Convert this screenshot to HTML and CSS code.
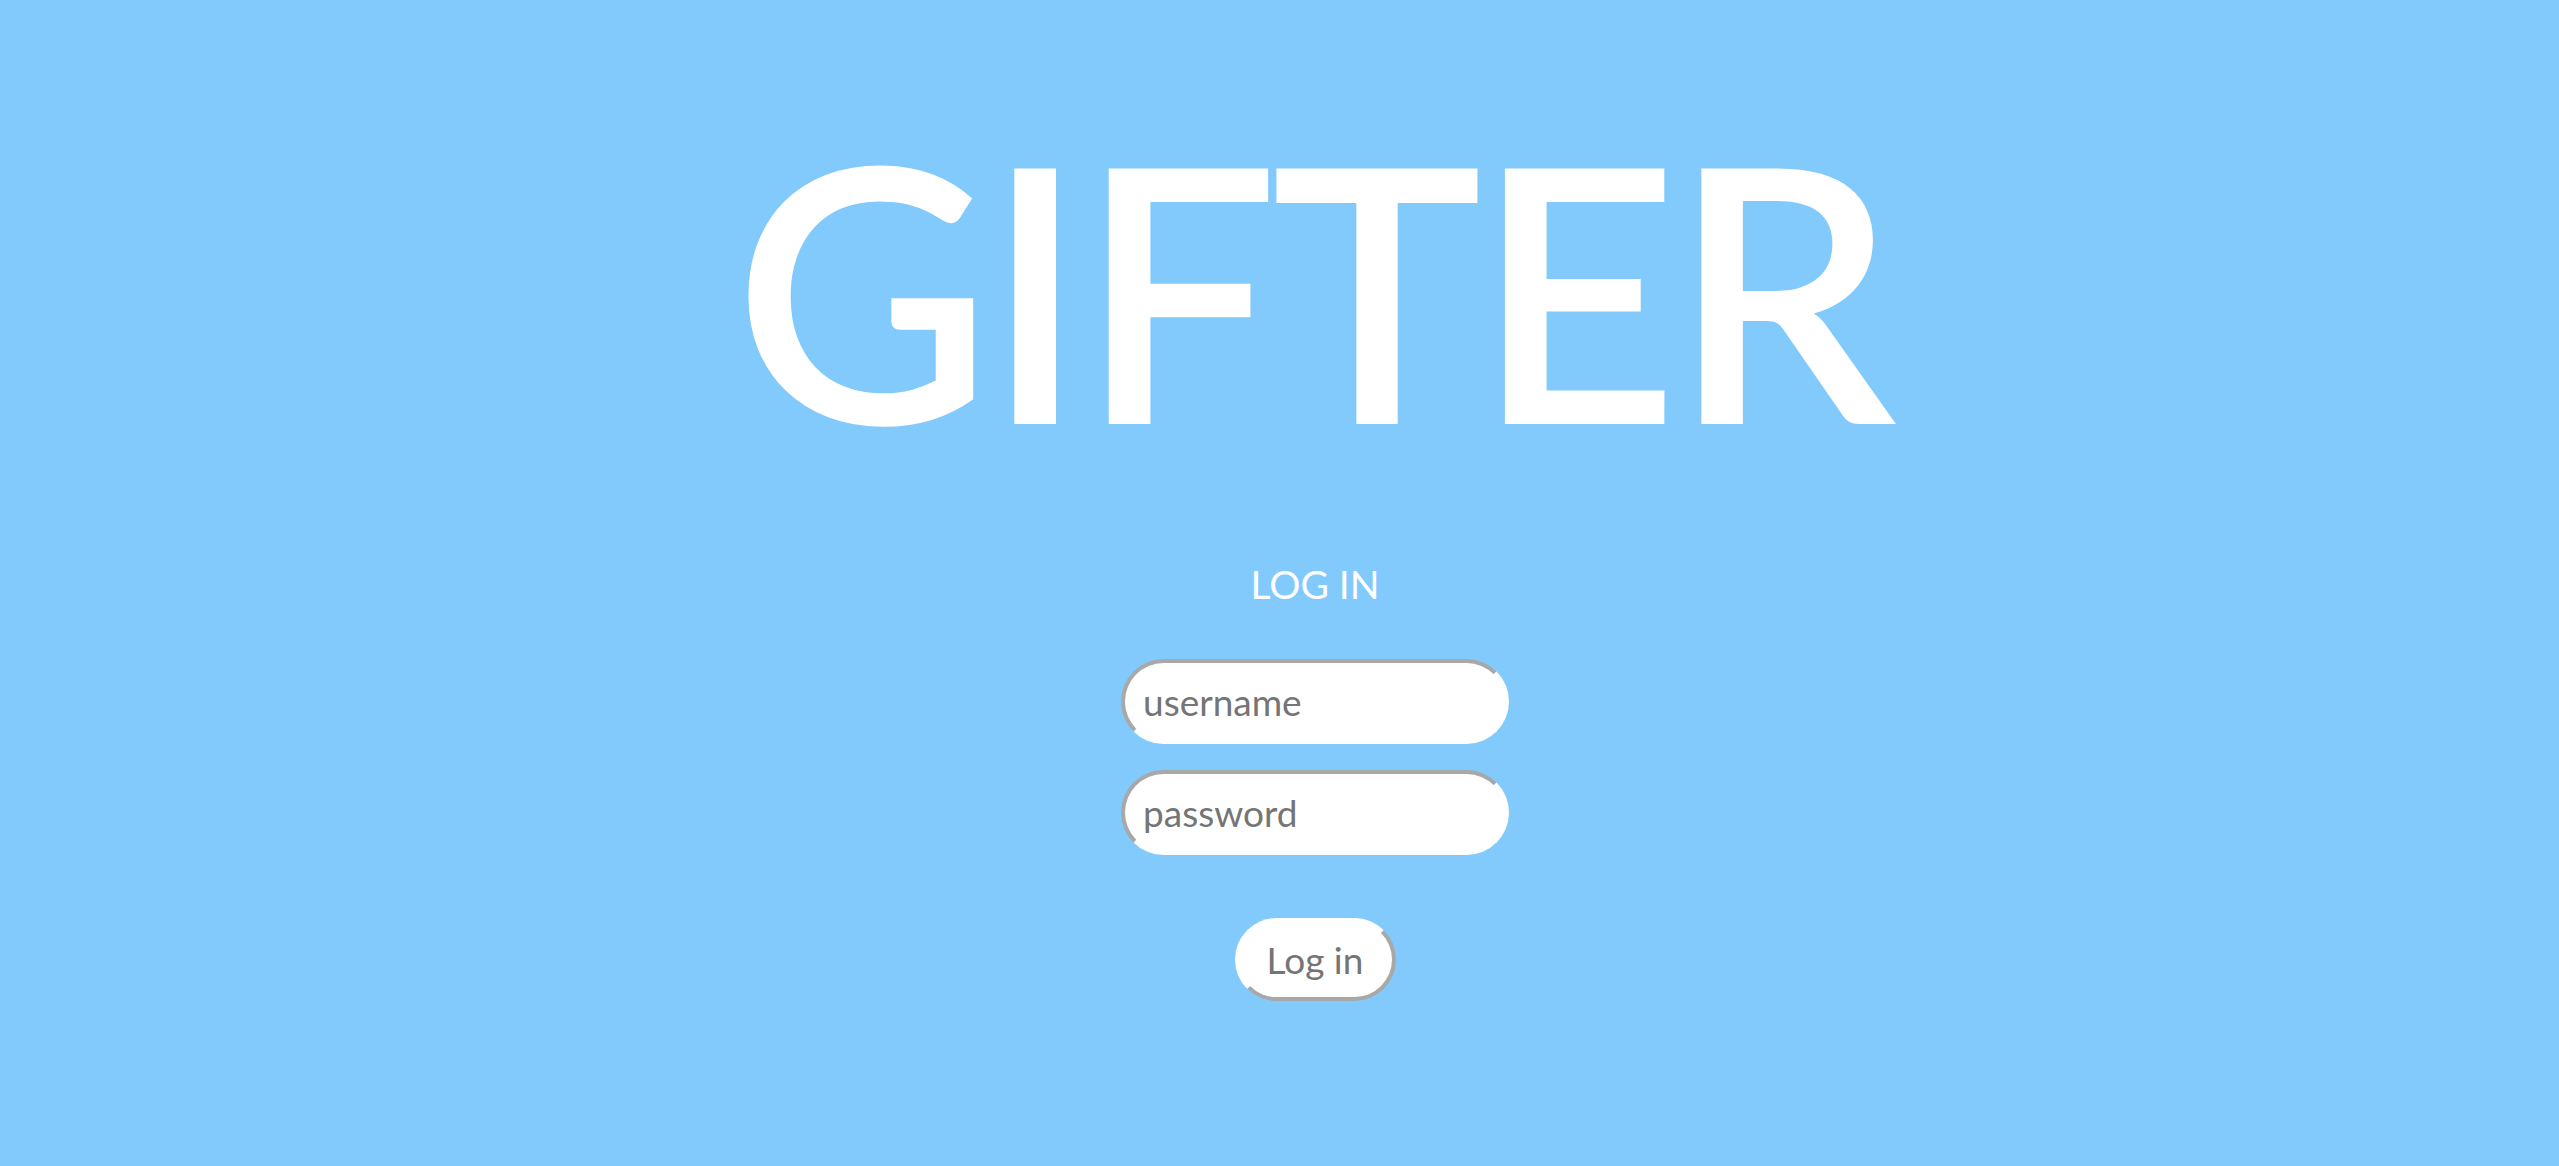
FILE: index.html
```html
<!DOCTYPE html>
<html lang="en">
<head>
<meta charset="utf-8">
<title>Gifter</title>
<link rel="stylesheet" href="styles.css">
</head>
<body>
<main class="page">
  <h1 class="brand">GIFTER</h1>
  <form class="login">
    <h2 class="login-title">LOG IN</h2>
    <input class="field" type="text" placeholder="username">
    <input class="field field-gap" type="password" placeholder="password">
    <button class="submit" type="button">Log in</button>
  </form>
</main>
</body>
</html>
```
FILE: styles.css
```css
html, body {
  margin: 0;
  padding: 0;
  background: #83cafc;
  height: 100%;
}
body {
  font-family: "Lato", "Liberation Sans", sans-serif;
}
.page {
  min-height: 1166px;
  box-sizing: border-box;
  display: flex;
  flex-direction: column;
  align-items: center;
  padding-top: 110px;
  padding-left: 71px;
}
.brand {
  margin: 0;
  font-size: 355px;
  line-height: 1;
  font-weight: 600;
  color: #fff;
  letter-spacing: -8px;
  margin-right: 8px;
}
.login {
  display: flex;
  flex-direction: column;
  align-items: center;
  margin-top: 100px;
}
.login-title {
  margin: 0 0 55px;
  font-size: 39px;
  line-height: 1;
  font-weight: 400;
  color: #fff;
}
.field {
  box-sizing: border-box;
  width: 388px;
  height: 85px;
  border-radius: 43px;
  border: 4px solid;
  border-color: #a8a8a8 #ffffff #ffffff #a8a8a8;
  background: #fff;
  padding: 0 0 0 18px;
  font-family: "Lato", "Liberation Sans", sans-serif;
  font-size: 37px;
  color: #757575;
  outline: none;
}
.field::placeholder {
  color: #757575;
  opacity: 1;
}
.field-gap {
  margin-top: 26px;
}
.submit {
  box-sizing: border-box;
  margin-top: 63px;
  width: 161px;
  height: 83px;
  border-radius: 42px;
  border: 4px solid;
  border-color: #ffffff #a8a8a8 #a8a8a8 #ffffff;
  background: #fff;
  padding: 0;
  font-family: "Lato", "Liberation Sans", sans-serif;
  font-size: 37px;
  color: #757575;
  cursor: pointer;
}
```
